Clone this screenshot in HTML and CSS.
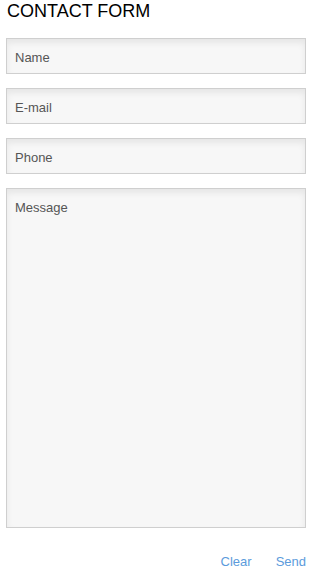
FILE: index.html
```html
<!DOCTYPE html>
<html lang="en">
<head>
    <meta charset="UTF-8">
    <meta name="viewport" content="width=device-width, initial-scale=1.0">
    <title>Contact Form</title>
    <link rel="stylesheet" href="styles.css">
</head>
<body>
    <h1>CONTACT FORM</h1>
    <form class="contact-form">
        <input type="text" class="field" placeholder="Name">
        <input type="email" class="field" placeholder="E-mail">
        <input type="tel" class="field" placeholder="Phone">
        <textarea class="field message" placeholder="Message"></textarea>
        <div class="actions">
            <button type="reset">Clear</button>
            <button type="submit">Send</button>
        </div>
    </form>
</body>
</html>
```

FILE: styles.css
```css
body {
    font-family: "Liberation Sans", Arial, sans-serif;
    background-color: #fff;
    margin: 0;
    padding: 0 6px;
}
h1 {
    font-size: 18px;
    font-weight: normal;
    line-height: 20px;
    color: #000;
    margin: 0;
    padding: 1px 0 0 1px;
}
.contact-form {
    display: flex;
    flex-direction: column;
    gap: 14px;
    margin-top: 17px;
}
.field {
    box-sizing: border-box;
    width: 300px;
    height: 36px;
    margin: 0;
    padding: 2px 8px 0;
    font-family: inherit;
    font-size: 13px;
    color: #444;
    background-color: #f7f7f7;
    border: 1px solid #cfcfcf;
    border-radius: 0;
    box-shadow: inset 0 4px 6px rgba(0, 0, 0, 0.07);
    outline: none;
}
.field::placeholder {
    color: #555;
    opacity: 1;
}
.message {
    height: 340px;
    padding: 11px 8px;
    resize: none;
}
.actions {
    display: flex;
    justify-content: flex-end;
    gap: 24px;
    margin-top: 12px;
}
.actions button {
    background: none;
    border: none;
    padding: 0;
    font-family: inherit;
    font-size: 13px;
    line-height: 15px;
    color: #5b9bdc;
    cursor: pointer;
}
```
